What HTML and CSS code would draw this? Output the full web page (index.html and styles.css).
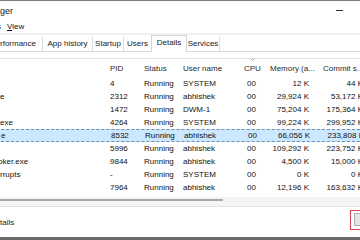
FILE: index.html
```html
<!DOCTYPE html>
<html>
<head>
<meta charset="utf-8">
<link rel="stylesheet" href="styles.css">
</head>
<body>
<div class="window">
  <div class="titlebar"><span class="title">ger</span><span class="min"></span></div>
  <div class="menubar"><span class="menu menu-cut">s</span><span class="menu"><u>V</u>iew</span></div>
  <div class="tabs">
    <div class="tab t1">rformance</div>
    <div class="tab t2">App history</div>
    <div class="tab t3">Startup</div>
    <div class="tab t4">Users</div>
    <div class="tab t5 active">Details</div>
    <div class="tab t6">Services</div>
  </div>
  <div class="panel">
    <div class="list">
      <div class="row head">
        <div class="c name"></div>
        <div class="c pid">PID</div>
        <div class="c status">Status</div>
        <div class="c user">User name</div>
        <div class="c cpu">CPU<svg class="sort" width="5" height="3" viewBox="0 0 5 3"><path d="M0.5 0.5 L2.5 2.5 L4.5 0.5" fill="none" stroke="#a9a9a9" stroke-width="1"/></svg></div>
        <div class="c mem">Memory (a...</div>
        <div class="c commit">Commit s...</div>
      </div>
      <div class="row"><div class="c name"></div><div class="c pid">4</div><div class="c status">Running</div><div class="c user">SYSTEM</div><div class="c cpu">00</div><div class="c mem">12 K</div><div class="c commit">44 K</div></div>
      <div class="row"><div class="c name">e</div><div class="c pid">2312</div><div class="c status">Running</div><div class="c user">abhishek</div><div class="c cpu">00</div><div class="c mem">29,924 K</div><div class="c commit">53,172 K</div></div>
      <div class="row"><div class="c name"></div><div class="c pid">1472</div><div class="c status">Running</div><div class="c user">DWM-1</div><div class="c cpu">00</div><div class="c mem">75,204 K</div><div class="c commit">175,364 K</div></div>
      <div class="row"><div class="c name">exe</div><div class="c pid">4264</div><div class="c status">Running</div><div class="c user">SYSTEM</div><div class="c cpu">00</div><div class="c mem">99,224 K</div><div class="c commit">299,952 K</div></div>
      <div class="row selected"><div class="c name">e</div><div class="c pid">8532</div><div class="c status">Running</div><div class="c user">abhishek</div><div class="c cpu">00</div><div class="c mem">66,056 K</div><div class="c commit">233,808 K</div></div>
      <div class="row"><div class="c name"></div><div class="c pid">5996</div><div class="c status">Running</div><div class="c user">abhishek</div><div class="c cpu">00</div><div class="c mem">109,292 K</div><div class="c commit">223,752 K</div></div>
      <div class="row"><div class="c name"><span class="cut">oker.exe</span></div><div class="c pid">9844</div><div class="c status">Running</div><div class="c user">abhishek</div><div class="c cpu">00</div><div class="c mem">4,500 K</div><div class="c commit">15,000 K</div></div>
      <div class="row"><div class="c name"><span class="indent">rrupts</span></div><div class="c pid">-</div><div class="c status">Running</div><div class="c user">SYSTEM</div><div class="c cpu">00</div><div class="c mem">0 K</div><div class="c commit">0 K</div></div>
      <div class="row"><div class="c name"></div><div class="c pid">7964</div><div class="c status">Running</div><div class="c user">abhishek</div><div class="c cpu">00</div><div class="c mem">12,196 K</div><div class="c commit">163,632 K</div></div>
    </div>
  </div>
  <div class="hscroll"><div class="thumb"></div></div>
  <div class="footer">
    <span class="details">tails</span>
    <span class="btn-mark"><span class="btn"></span></span>
  </div>
</div>
</body>
</html>
```
FILE: styles.css
```css
html, body {
  margin: 0;
  padding: 0;
}
body {
  width: 360px;
  height: 240px;
  overflow: hidden;
  background: #fff;
  font-family: "Liberation Sans", Arial, sans-serif;
  font-size: 8px;
  color: #111;
}
.window {
  height: 240px;
  box-sizing: border-box;
  border-top: 1px solid #7b7b7b;
  border-bottom: 3px solid #6a6a6a;
  display: flex;
  flex-direction: column;
}
.titlebar {
  height: 19px;
  flex: none;
  display: flex;
  align-items: center;
  justify-content: space-between;
  padding-right: 17px;
}
.title {
  font-size: 9px;
  color: #222;
  margin-top: 1px;
}
.min {
  width: 7px;
  height: 1px;
  background: #333;
}
.menubar {
  height: 13px;
  flex: none;
  display: flex;
  align-items: center;
  border-bottom: 2px solid #f0f0f0;
}
.menu-cut {
  margin-left: -3px;
  margin-right: 6px;
}
.tabs {
  height: 16px;
  flex: none;
  display: flex;
  align-items: flex-end;
  border-bottom: 1px solid #d9d9d9;
}
.tab {
  height: 14px;
  box-sizing: border-box;
  line-height: 14px;
  text-align: center;
  white-space: nowrap;
  color: #1a1a1a;
  border-right: 1px solid #dcdcdc;
}
.t1 { width: 43px; text-align: left; }
.t2 { width: 50px; }
.t3 { width: 31px; }
.t4 { width: 27px; border-right: none; }
.t6 { width: 33px; }
.tab.active {
  width: 36px;
  height: 17px;
  line-height: 14px;
  margin-bottom: -1px;
  background: #fff;
  border: 1px solid #d4d4d4;
  border-bottom: none;
}
.panel {
  flex: none;
  padding-top: 6px;
}
.list {
  border-top: 1px solid #e3e3e3;
  margin-left: -4px;
  width: 374px;
}
.row {
  display: grid;
  grid-template-columns: 110px 34px 40px 60px 24px 54px 52px;
  height: 13px;
  box-sizing: border-box;
  align-items: center;
  white-space: nowrap;
}
.row.head {
  height: 18px;
  color: #2b2b2b;
}
.c {
  overflow: hidden;
}
.name { padding-left: 4px; }
.pid { padding-left: 4px; }
.status { padding-left: 4px; }
.user { padding-left: 3px; }
.cpu { text-align: right; padding-right: 8px; }
.mem { text-align: right; padding-right: 9px; }
.commit { text-align: right; overflow: visible; padding-right: 7px; }
.head .cpu { text-align: left; padding: 0 0 0 4px; position: relative; overflow: visible; }
.head .mem { text-align: left; padding: 0 0 0 6px; }
.head .commit { text-align: left; padding: 0 0 0 5px; }
.sort {
  position: absolute;
  left: 10px;
  top: -6px;
}
.cut { margin-left: -2px; }
.indent { margin-left: 0; }
.row.selected {
  background: #cce8ff;
  border: 1px dashed #6f8fb3;
}
.hscroll {
  margin-top: 3px;
  height: 9px;
  flex: none;
  background: #f4f4f4;
  border-bottom: 1px solid #e3e3e3;
}
.thumb {
  margin-top: 2px;
  width: 223px;
  height: 2px;
  background: #a9a9a9;
}
.footer {
  flex: 1;
  display: flex;
  align-items: center;
  justify-content: space-between;
}
.details {
  color: #1a1a1a;
}
.btn-mark {
  align-self: flex-start;
  margin-top: 3px;
  margin-right: -6px;
  width: 16px;
  height: 20px;
  box-sizing: border-box;
  border: 1.5px solid #d8435a;
  padding: 2px 0 0 3px;
}
.btn {
  display: block;
  width: 14px;
  height: 13px;
  box-sizing: border-box;
  border: 1px solid #adadad;
  background: #e5e5e5;
}
```
